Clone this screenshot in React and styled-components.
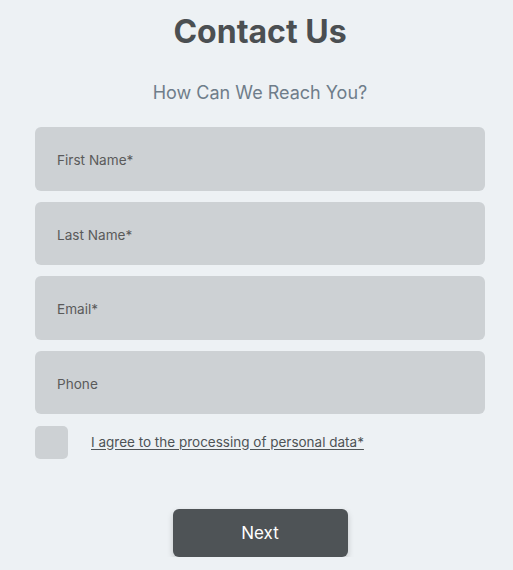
import React from "react";
import styled, { createGlobalStyle } from "styled-components";

const Global = createGlobalStyle`
  html, body { margin: 0; padding: 0; background: #edf1f4; }
  body { font-family: Inter, "Noto Sans", sans-serif; }
`;

const Page = styled.div`
  width: 450px;
  margin-left: 35px;
  display: flex;
  flex-direction: column;
  align-items: stretch;
`;

const Title = styled.h1`
  margin: 10px 0 0;
  text-align: center;
  font-size: 32px;
  line-height: 44px;
  font-weight: 700;
  color: #4b4f52;
`;

const Subtitle = styled.h2`
  margin: 27px 0 0;
  text-align: center;
  font-size: 18px;
  line-height: 24px;
  font-weight: 400;
  color: #6f7d8a;
`;

const Fields = styled.div`
  margin-top: 22px;
  display: flex;
  flex-direction: column;
  gap: 11px;
`;

const Field = styled.div`
  height: 63.5px;
  box-sizing: border-box;
  background: #cdd1d4;
  border-radius: 6px;
  display: flex;
  align-items: center;
  padding: 3px 0 0 22px;
  font-size: 13.6px;
  color: #5a5a5a;
`;

const AgreeRow = styled.label`
  margin-top: 12px;
  display: flex;
  align-items: center;
  gap: 23px;
`;

const Box = styled.span`
  width: 33px;
  height: 33px;
  border-radius: 5px;
  background: #cdd1d4;
`;

const AgreeText = styled.span`
  font-size: 13.5px;
  color: #4e5356;
  text-decoration: underline;
  text-underline-offset: 2px;
  margin-top: -2px;
`;

const Button = styled.button`
  align-self: center;
  margin-top: 50px;
  width: 175px;
  height: 48px;
  border: none;
  border-radius: 6px;
  background: #4e5356;
  color: #fff;
  font-family: inherit;
  font-size: 17px;
  box-shadow: 0 3px 6px rgba(0, 0, 0, 0.18);
`;

export default function App() {
  const fields = ["First Name*", "Last Name*", "Email*", "Phone"];
  return (
    <>
      <Global />
      <Page>
        <Title>Contact Us</Title>
        <Subtitle>How Can We Reach You?</Subtitle>
        <Fields>
          {fields.map((f) => (
            <Field key={f}>{f}</Field>
          ))}
        </Fields>
        <AgreeRow>
          <Box />
          <AgreeText>I agree to the processing of personal data*</AgreeText>
        </AgreeRow>
        <Button>Next</Button>
      </Page>
    </>
  );
}
